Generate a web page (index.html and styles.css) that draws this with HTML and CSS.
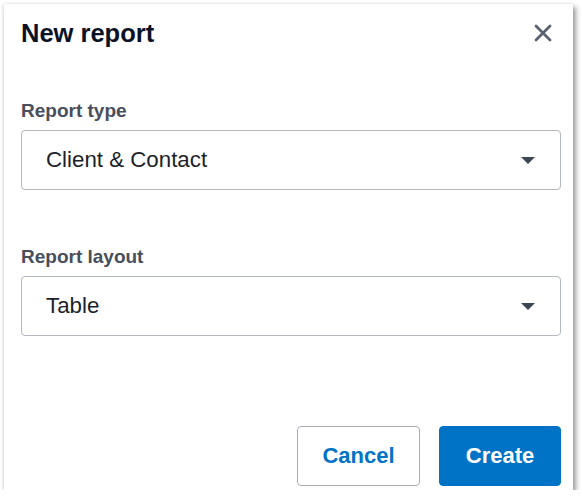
FILE: index.html
```html
<!DOCTYPE html>
<html lang="en">
<head>
<meta charset="utf-8">
<title>New report</title>
<link rel="stylesheet" href="styles.css">
</head>
<body>
<div class="dialog">
  <div class="header">
    <h1 class="title">New report</h1>
    <svg class="close" width="18" height="18" viewBox="0 0 18 18" aria-label="Close">
      <path d="M2 2 L16 16 M16 2 L2 16" stroke="#5a6272" stroke-width="2.8" stroke-linecap="round" fill="none"/>
    </svg>
  </div>
  <div class="field first">
    <div class="label">Report type</div>
    <div class="select"><span class="value">Client &amp; Contact</span><span class="caret"></span></div>
  </div>
  <div class="field">
    <div class="label">Report layout</div>
    <div class="select"><span class="value">Table</span><span class="caret"></span></div>
  </div>
  <div class="actions">
    <button class="btn btn-secondary">Cancel</button>
    <button class="btn btn-primary">Create</button>
  </div>
</div>
</body>
</html>
```
FILE: styles.css
```css
html, body {
  margin: 0;
  padding: 0;
  background: #ffffff;
}
body {
  font-family: "Liberation Sans", Arial, sans-serif;
}
.dialog {
  margin: 4px 0 0 4px;
  width: 569px;
  height: 486px;
  box-sizing: border-box;
  padding: 15px 12px 4px 17px;
  background: #fff;
  box-shadow: 3px 3px 5px rgba(0, 0, 0, 0.38), -1px 0 3px rgba(0, 0, 0, 0.12);
  display: flex;
  flex-direction: column;
}
.header {
  display: flex;
  align-items: center;
  justify-content: space-between;
  height: 28px;
}
.title {
  margin: 0;
  font-size: 25.5px;
  line-height: 28px;
  font-weight: 700;
  color: #0b1226;
}
.close {
  margin-right: 9px;
  display: block;
}
.field {
  display: flex;
  flex-direction: column;
  gap: 8px;
  margin-top: 56px;
}
.field.first {
  margin-top: 53px;
}
.label {
  font-size: 19px;
  line-height: 22px;
  font-weight: 700;
  color: #474e5c;
}
.select {
  height: 60px;
  box-sizing: border-box;
  border: 1px solid #b4b8c0;
  border-radius: 4px;
  display: flex;
  align-items: center;
  justify-content: space-between;
  padding: 0 25px 0 24px;
}
.value {
  font-size: 22.3px;
  color: #1c1f2a;
}
.caret {
  width: 0;
  height: 0;
  border-left: 7.5px solid transparent;
  border-right: 7.5px solid transparent;
  border-top: 7px solid #3d4656;
}
.actions {
  margin-top: auto;
  display: flex;
  justify-content: flex-end;
  gap: 19px;
}
.btn {
  height: 60px;
  border-radius: 4px;
  font-family: "Liberation Sans", Arial, sans-serif;
  font-size: 22px;
  font-weight: 700;
  padding: 0;
  cursor: pointer;
}
.btn-secondary {
  width: 123px;
  background: #fff;
  border: 1px solid #a8adb5;
  color: #0073c6;
}
.btn-primary {
  width: 122px;
  background: #0073c6;
  border: 1px solid #0073c6;
  color: #fff;
}
```
